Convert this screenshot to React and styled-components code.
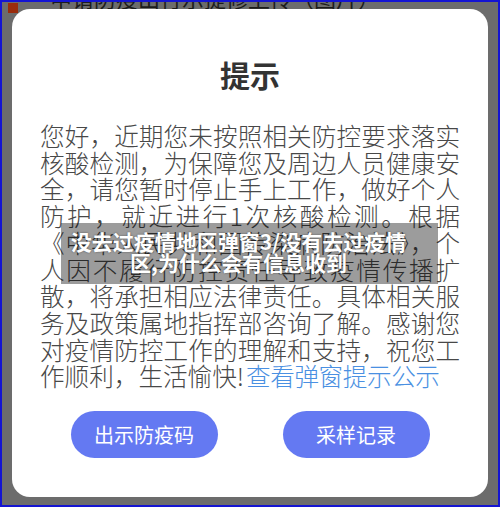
import React from "react";
import styled, { createGlobalStyle } from "styled-components";

const GlobalStyle = createGlobalStyle`
  html, body {
    margin: 0;
    padding: 0;
    background: #6c6c6c;
  }
  * {
    box-sizing: border-box;
  }
`;

const Screen = styled.div`
  position: relative;
  width: 500px;
  height: 507px;
  border: 2px solid #1414d2;
  background-color: #6c6c6c;
  overflow: hidden;
  font-family: "Noto Sans CJK SC", "Noto Sans", sans-serif;
`;
const BackStrip = styled.div`
  display: flex;
  align-items: flex-start;
  height: 7px;
  padding-left: 6px;
`;
const BackBadge = styled.div`
  width: 10px;
  height: 10px;
  margin-top: 1px;
  background-color: #9a2c0c;
  flex-shrink: 0;
`;
const BackTitle = styled.div`
  margin-top: -16px;
  margin-left: 32px;
  font-size: 22px;
  line-height: 22px;
  color: #1c1c1c;
  white-space: nowrap;
`;
const Modal = styled.div`
  position: relative;
  z-index: 1;
  display: flex;
  flex-direction: column;
  align-items: center;
  width: 476px;
  height: 488px;
  margin: 0 10px;
  padding: 47px 28px 39px;
  background-color: #fff;
  border-radius: 18px;
`;
const Title = styled.div`
  font-size: 30px;
  line-height: 36px;
  font-weight: 700;
  color: #333;
`;
const Body = styled.div`
  width: 420px;
  margin-top: 30px;
  font-size: 24.6px;
  line-height: 26.7px;
  font-weight: 300;
  color: #484848;
`;
const Line = styled.div`
  text-align: ${(p) => (p.$last ? "left" : "justify")};
  text-align-last: ${(p) => (p.$last ? "left" : "justify")};
`;
const Link = styled.span`
  color: #4a90e2;
  margin-left: 2px;
  letter-spacing: -0.4px;
`;
const Buttons = styled.div`
  display: flex;
  justify-content: center;
  gap: 65px;
  margin-top: 22px;
`;
const Button = styled.button`
  width: 147px;
  height: 47px;
  border: none;
  border-radius: 24px;
  background-color: #6479f2;
  color: #fff;
  font-family: inherit;
  font-size: 20px;
  padding: 0;
`;
const Caption = styled.div`
  position: absolute;
  left: 49px;
  top: 214px;
  width: 377px;
  height: 61px;
  padding: 8px 26px 0 4px;
  background-color: rgba(0, 0, 0, 0.39);
  color: #fff;
  font-size: 21px;
  line-height: 21px;
  font-weight: 700;
  text-align: center;
  text-shadow: 0 0 2px rgba(0, 0, 0, 0.5);
`;

const lines = [
  "您好，近期您未按照相关防控要求落实",
  "核酸检测，为保障您及周边人员健康安",
  "全，请您暂时停止手上工作，做好个人",
  "防护，就近进行1次核酸检测。根据",
  "《中华人民共和国传染病防治法》，个",
  "人因不履行防控责任导致疫情传播扩",
  "散，将承担相应法律责任。具体相关服",
  "务及政策属地指挥部咨询了解。感谢您",
  "对疫情防控工作的理解和支持，祝您工",
];

export default function App() {
  return (
    <>
      <GlobalStyle />
      <Screen>
        <BackStrip>
          <BackBadge />
          <BackTitle>申请防疫出行示提修上传（图片）</BackTitle>
        </BackStrip>
        <Modal>
          <Title>提示</Title>
          <Body>
            {lines.map((l) => (
              <Line key={l}>{l}</Line>
            ))}
            <Line $last>
              作顺利，生活愉快!<Link>查看弹窗提示公示</Link>
            </Line>
          </Body>
          <Buttons>
            <Button>出示防疫码</Button>
            <Button>采样记录</Button>
          </Buttons>
          <Caption>
            没去过疫情地区弹窗3/没有去过疫情
            <br />
            区,为什么会有信息收到
          </Caption>
        </Modal>
      </Screen>
    </>
  );
}
